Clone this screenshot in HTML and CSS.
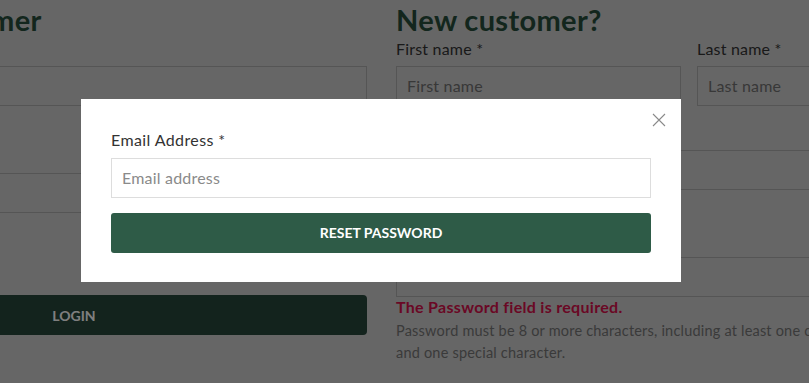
FILE: index.html
```html
<!DOCTYPE html>
<html lang="en">
<head>
<meta charset="utf-8">
<title>Account</title>
<link rel="stylesheet" href="styles.css">
</head>
<body>
<main class="page">
  <section class="col">
    <h2 class="title">Returning customer</h2>
    <div class="field">
      <label class="label">Email address *</label>
      <input class="input" type="text" placeholder="">
    </div>
    <div class="field field--gap">
      <label class="label">Password *</label>
      <input class="input" type="password" placeholder="">
    </div>
    <button class="btn-login" type="button">LOGIN</button>
  </section>
  <section class="col">
    <h2 class="title">New customer?</h2>
    <div class="row">
      <div class="field">
        <label class="label">First name *</label>
        <input class="input" type="text" placeholder="First name">
      </div>
      <div class="field">
        <label class="label">Last name *</label>
        <input class="input" type="text" placeholder="Last name">
      </div>
    </div>
    <div class="field field--next">
      <label class="label">Email address *</label>
      <input class="input" type="text" placeholder="Email address">
    </div>
    <div class="field field--gap">
      <label class="label">Password *</label>
      <input class="input" type="password" placeholder="">
    </div>
    <p class="error">The Password field is required.</p>
    <p class="help">Password must be 8 or more characters, including at least one capital letter, one number and one special character.</p>
  </section>
</main>

<div class="overlay">
  <div class="modal">
    <button class="close" type="button" aria-label="Close">
      <svg width="14" height="14" viewBox="0 0 14 14"><path d="M1 1 L13 13 M13 1 L1 13" stroke="#8a8a8a" stroke-width="1.1" fill="none"/></svg>
    </button>
    <label class="m-label">Email Address *</label>
    <input class="m-input" type="text" placeholder="Email address">
    <button class="m-btn" type="button">RESET PASSWORD</button>
  </div>
</div>
</body>
</html>
```
FILE: styles.css
```css
* { box-sizing: border-box; }
html, body { margin: 0; padding: 0; }
body {
  background: #cccccc;
  font-family: Lato, "Open Sans", sans-serif;
  letter-spacing: 0.2px;
  overflow: hidden;
  width: 809px;
  height: 383px;
}
.page {
  display: grid;
  grid-template-columns: 586px 586px;
  column-gap: 29px;
  margin-left: -219px;
  padding-top: 2px;
}
.col { display: flex; flex-direction: column; }
.title {
  margin: 0;
  font-size: 29px;
  line-height: 36px;
  font-weight: 700;
  letter-spacing: 0.35px;
  color: #264c3b;
}
.row {
  display: grid;
  grid-template-columns: 285px 285px;
  column-gap: 16px;
}
.field { display: flex; flex-direction: column; }
.field--next { margin-top: 16px; }
.field--gap { margin-top: 67px; }
.label {
  font-size: 16px;
  line-height: 22px;
  color: #333;
  margin-bottom: 6px;
}
.field--gap .label { margin-top: -28px; }
.input {
  height: 40px;
  border: 1px solid #aaa;
  background: #ccc;
  font-family: inherit;
  letter-spacing: inherit;
  font-size: 16px;
  padding: 0 10px 2px;
  color: #333;
}
.input::placeholder { color: #707070; }
.btn-login {
  margin-top: 82px;
  height: 40px;
  border: 0;
  border-radius: 4px;
  background: #26463a;
  color: #fff;
  font-family: inherit;
  font-weight: 700;
  font-size: 14px;
  letter-spacing: 0;
  padding: 0;
}
.error {
  margin: 0;
  font-size: 16px;
  line-height: 20px;
  font-weight: 700;
  letter-spacing: 0.3px;
  color: #d4104a;
}
.help {
  margin: 3px 0 0;
  font-size: 14.5px;
  line-height: 22px;
  color: #757575;
}
.overlay {
  position: fixed;
  inset: 0;
  background: rgba(0, 0, 0, 0.5);
}
.modal {
  position: absolute;
  left: 81px;
  top: 99px;
  width: 600px;
  background: #fff;
  padding: 30px 30px 29px;
  display: flex;
  flex-direction: column;
}
.close {
  position: absolute;
  right: 15px;
  top: 14px;
  width: 14px;
  height: 14px;
  padding: 0;
  border: 0;
  background: none;
  display: flex;
}
.m-label {
  font-size: 16px;
  line-height: 22px;
  letter-spacing: 0.4px;
  color: #333;
  margin-bottom: 7px;
}
.m-input {
  height: 40px;
  border: 1px solid #ddd;
  font-family: inherit;
  letter-spacing: inherit;
  font-size: 16px;
  padding: 0 10px 2px;
  color: #333;
}
.m-input::placeholder { color: #8a8a8a; }
.m-btn {
  margin-top: 15px;
  height: 40px;
  border: 0;
  border-radius: 3px;
  background: #2e5b47;
  color: #fff;
  font-family: inherit;
  font-weight: 700;
  font-size: 14px;
  letter-spacing: 0;
  padding: 0 0 1px;
}
```
